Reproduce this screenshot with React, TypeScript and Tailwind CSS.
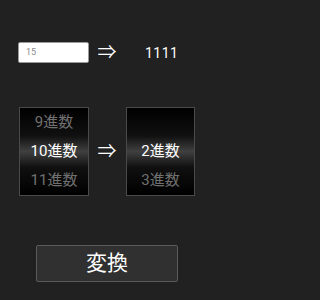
const font = "font-['Roboto','Noto_Sans_CJK_JP',sans-serif]";

function Picker({ items, className }: { items: { label: string; active?: boolean }[]; className?: string }) {
  return (
    <div
      className={`flex h-[89px] flex-col border border-[#4a4a4a] bg-[linear-gradient(to_bottom,#000_0%,#101010_32%,#404040_50%,#101010_68%,#000_100%)] ${className ?? ''}`}
    >
      {items.map((it, i) => (
        <div
          key={i}
          className={`flex h-[29px] items-center justify-center text-[15px] leading-none ${
            it.active ? 'text-white' : 'text-[#707070]'
          }`}
        >
          {it.label}
        </div>
      ))}
    </div>
  );
}

export default function App() {
  return (
    <div className={`flex min-h-screen w-full flex-col bg-[#212121] ${font}`}>
      <div className="mt-[42px] flex h-[21px] items-center">
        <div className="ml-[18px] flex h-[21px] w-[71px] items-center rounded-[2px] border border-[#9a9a9a] bg-white pl-[7px] text-[9px] text-[#8a8a8a]">
          15
        </div>
        <span className="ml-[8px] w-[20px] text-center text-[19px] leading-none text-white">⇒</span>
        <span className="ml-[28px] text-[14px] leading-none tracking-[0.5px] text-white">1111</span>
      </div>

      <div className="mt-[44px] flex items-center">
        <Picker
          className="ml-[19px] w-[70px]"
          items={[{ label: '9進数' }, { label: '10進数', active: true }, { label: '11進数' }]}
        />
        <span className="ml-[8px] w-[20px] text-center text-[19px] leading-none text-white">⇒</span>
        <Picker
          className="ml-[9px] w-[69px]"
          items={[{ label: '' }, { label: '2進数', active: true }, { label: '3進数' }]}
        />
      </div>

      <button
        type="button"
        className="ml-[36px] mt-[49px] flex h-[37px] w-[142px] items-center justify-center rounded-[2px] border border-[#5a5a5a] bg-[#303030] text-[21px] leading-none text-white"
      >
        変換
      </button>
    </div>
  );
}
